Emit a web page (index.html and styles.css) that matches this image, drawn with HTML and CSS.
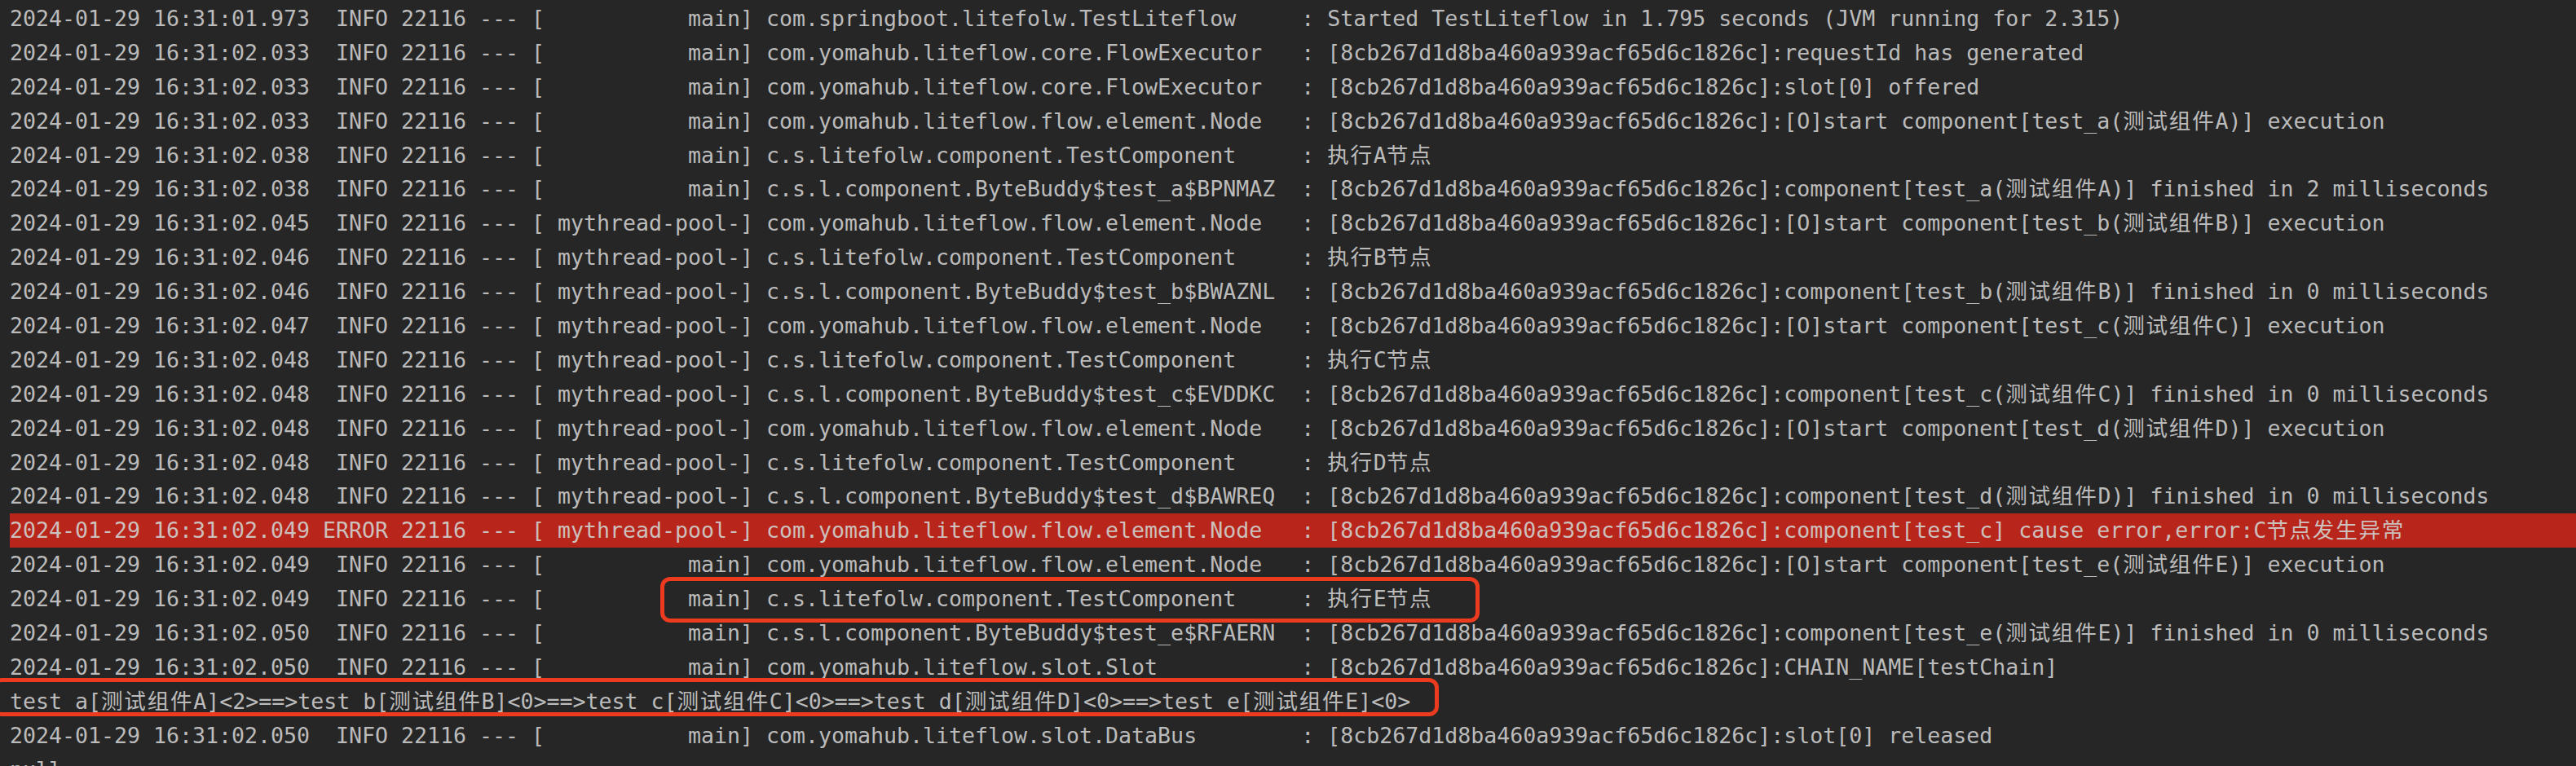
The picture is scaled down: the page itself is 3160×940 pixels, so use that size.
FILE: index.html
```html
<!DOCTYPE html>
<html lang="zh-CN">
<head>
    <meta charset="UTF-8">
    <meta name="viewport" content="width=device-width, initial-scale=1.0">
    <title>TestLiteflow - Console</title>
    <link rel="stylesheet" href="styles.css">
</head>
<body>
    <div class="console">
        <!-- Вывод консоли -->
        <div class="line">2024-01-29 16:31:01.973  INFO 22116 --- [           main] com.springboot.litefolw.TestLiteflow     : Started TestLiteflow in 1.795 seconds (JVM running for 2.315)</div>
        <div class="line">2024-01-29 16:31:02.033  INFO 22116 --- [           main] com.yomahub.liteflow.core.FlowExecutor   : [8cb267d1d8ba460a939acf65d6c1826c]:requestId has generated</div>
        <div class="line">2024-01-29 16:31:02.033  INFO 22116 --- [           main] com.yomahub.liteflow.core.FlowExecutor   : [8cb267d1d8ba460a939acf65d6c1826c]:slot[0] offered</div>
        <div class="line">2024-01-29 16:31:02.033  INFO 22116 --- [           main] com.yomahub.liteflow.flow.element.Node   : [8cb267d1d8ba460a939acf65d6c1826c]:[O]start component[test_a(<span class="cn">测试组件</span>A)] execution</div>
        <div class="line">2024-01-29 16:31:02.038  INFO 22116 --- [           main] c.s.litefolw.component.TestComponent     : <span class="cn">执行</span>A<span class="cn">节点</span></div>
        <div class="line">2024-01-29 16:31:02.038  INFO 22116 --- [           main] c.s.l.component.ByteBuddy$test_a$BPNMAZ  : [8cb267d1d8ba460a939acf65d6c1826c]:component[test_a(<span class="cn">测试组件</span>A)] finished in 2 milliseconds</div>
        <div class="line">2024-01-29 16:31:02.045  INFO 22116 --- [ mythread-pool-] com.yomahub.liteflow.flow.element.Node   : [8cb267d1d8ba460a939acf65d6c1826c]:[O]start component[test_b(<span class="cn">测试组件</span>B)] execution</div>
        <div class="line">2024-01-29 16:31:02.046  INFO 22116 --- [ mythread-pool-] c.s.litefolw.component.TestComponent     : <span class="cn">执行</span>B<span class="cn">节点</span></div>
        <div class="line">2024-01-29 16:31:02.046  INFO 22116 --- [ mythread-pool-] c.s.l.component.ByteBuddy$test_b$BWAZNL  : [8cb267d1d8ba460a939acf65d6c1826c]:component[test_b(<span class="cn">测试组件</span>B)] finished in 0 milliseconds</div>
        <div class="line">2024-01-29 16:31:02.047  INFO 22116 --- [ mythread-pool-] com.yomahub.liteflow.flow.element.Node   : [8cb267d1d8ba460a939acf65d6c1826c]:[O]start component[test_c(<span class="cn">测试组件</span>C)] execution</div>
        <div class="line">2024-01-29 16:31:02.048  INFO 22116 --- [ mythread-pool-] c.s.litefolw.component.TestComponent     : <span class="cn">执行</span>C<span class="cn">节点</span></div>
        <div class="line">2024-01-29 16:31:02.048  INFO 22116 --- [ mythread-pool-] c.s.l.component.ByteBuddy$test_c$EVDDKC  : [8cb267d1d8ba460a939acf65d6c1826c]:component[test_c(<span class="cn">测试组件</span>C)] finished in 0 milliseconds</div>
        <div class="line">2024-01-29 16:31:02.048  INFO 22116 --- [ mythread-pool-] com.yomahub.liteflow.flow.element.Node   : [8cb267d1d8ba460a939acf65d6c1826c]:[O]start component[test_d(<span class="cn">测试组件</span>D)] execution</div>
        <div class="line">2024-01-29 16:31:02.048  INFO 22116 --- [ mythread-pool-] c.s.litefolw.component.TestComponent     : <span class="cn">执行</span>D<span class="cn">节点</span></div>
        <div class="line">2024-01-29 16:31:02.048  INFO 22116 --- [ mythread-pool-] c.s.l.component.ByteBuddy$test_d$BAWREQ  : [8cb267d1d8ba460a939acf65d6c1826c]:component[test_d(<span class="cn">测试组件</span>D)] finished in 0 milliseconds</div>
        <div class="line error">2024-01-29 16:31:02.049 ERROR 22116 --- [ mythread-pool-] com.yomahub.liteflow.flow.element.Node   : [8cb267d1d8ba460a939acf65d6c1826c]:component[test_c] cause error,error:C<span class="cn">节点发生异常</span></div>
        <div class="line">2024-01-29 16:31:02.049  INFO 22116 --- [           main] com.yomahub.liteflow.flow.element.Node   : [8cb267d1d8ba460a939acf65d6c1826c]:[O]start component[test_e(<span class="cn">测试组件</span>E)] execution</div>
        <div class="line">2024-01-29 16:31:02.049  INFO 22116 --- [           main] c.s.litefolw.component.TestComponent     : <span class="cn">执行</span>E<span class="cn">节点</span></div>
        <div class="line">2024-01-29 16:31:02.050  INFO 22116 --- [           main] c.s.l.component.ByteBuddy$test_e$RFAERN  : [8cb267d1d8ba460a939acf65d6c1826c]:component[test_e(<span class="cn">测试组件</span>E)] finished in 0 milliseconds</div>
        <div class="line">2024-01-29 16:31:02.050  INFO 22116 --- [           main] com.yomahub.liteflow.slot.Slot           : [8cb267d1d8ba460a939acf65d6c1826c]:CHAIN_NAME[testChain]</div>
        <div class="line">test_a[<span class="cn">测试组件</span>A]&lt;2&gt;==&gt;test_b[<span class="cn">测试组件</span>B]&lt;0&gt;==&gt;test_c[<span class="cn">测试组件</span>C]&lt;0&gt;==&gt;test_d[<span class="cn">测试组件</span>D]&lt;0&gt;==&gt;test_e[<span class="cn">测试组件</span>E]&lt;0&gt;</div>
        <div class="line">2024-01-29 16:31:02.050  INFO 22116 --- [           main] com.yomahub.liteflow.slot.DataBus        : [8cb267d1d8ba460a939acf65d6c1826c]:slot[0] released</div>
        <div class="line">null</div>

        <!-- Красные рамки поверх вывода -->
        <div class="mark mark-node"></div>
        <div class="mark mark-chain"></div>
    </div>
</body>
</html>
```

FILE: styles.css
```css
/* Общие стили */
body {
    margin: 0;
    background-color: #262626;
    overflow: hidden;
}

.console {
    position: relative;
    padding: 2px 0 0 12px;
    height: 938px;
    font-family: 'DejaVu Sans Mono', 'Noto Sans CJK SC', monospace;
    font-size: 26.58px;
    color: #bbbbbb;
}

.line {
    height: 41.9px;
    line-height: 41.9px;
    white-space: pre;
}

/* Строка с ошибкой */
.line.error {
    background-color: #b8261b;
    color: #cdbfbc;
}

/* Китайские символы чуть шире */
.cn {
    letter-spacing: 0.065em;
}

/* Выделение рамкой */
.mark {
    position: absolute;
    box-sizing: border-box;
    border: 5px solid #ec3b1f;
    border-radius: 12px;
}

.mark-node {
    left: 810px;
    top: 708px;
    width: 1005px;
    height: 56px;
}

.mark-chain {
    left: -10px;
    top: 832px;
    width: 1775px;
    height: 47px;
}
```
